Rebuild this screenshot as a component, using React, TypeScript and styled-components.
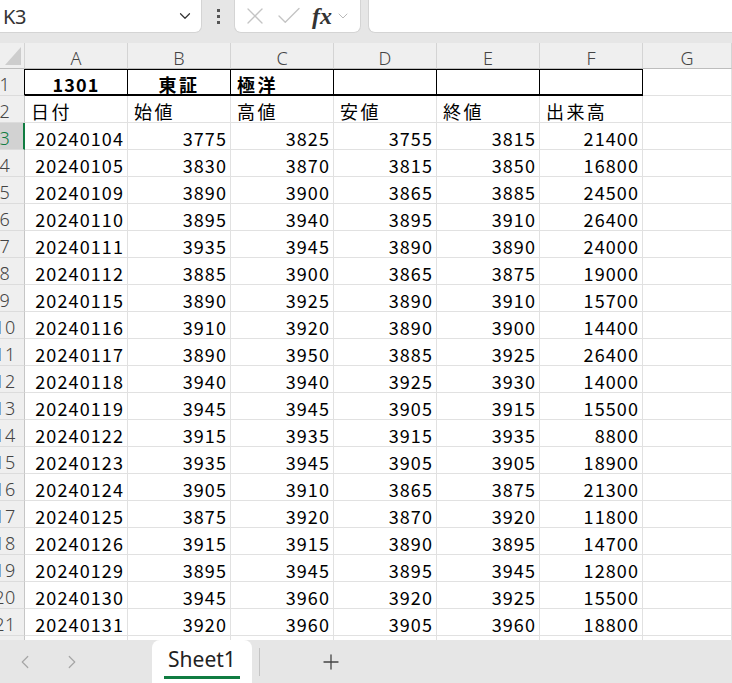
import React from 'react'
import styled, { createGlobalStyle, css } from 'styled-components'
import { ChevronDown, ChevronLeft, ChevronRight, Plus, X, Check } from 'lucide-react'

const GlobalStyle = createGlobalStyle`
  html, body {
    margin: 0;
    padding: 0;
    background: #e6e6e6;
    overflow: hidden;
  }
  * {
    box-sizing: border-box;
  }
`

const CELL_FONT = `"Noto Sans CJK JP", "Noto Sans", sans-serif`

const rows: [string, number, number, number, number, number][] = [
  ['20240104', 3775, 3825, 3755, 3815, 21400],
  ['20240105', 3830, 3870, 3815, 3850, 16800],
  ['20240109', 3890, 3900, 3865, 3885, 24500],
  ['20240110', 3895, 3940, 3895, 3910, 26400],
  ['20240111', 3935, 3945, 3890, 3890, 24000],
  ['20240112', 3885, 3900, 3865, 3875, 19000],
  ['20240115', 3890, 3925, 3890, 3910, 15700],
  ['20240116', 3910, 3920, 3890, 3900, 14400],
  ['20240117', 3890, 3950, 3885, 3925, 26400],
  ['20240118', 3940, 3940, 3925, 3930, 14000],
  ['20240119', 3945, 3945, 3905, 3915, 15500],
  ['20240122', 3915, 3935, 3915, 3935, 8800],
  ['20240123', 3935, 3945, 3905, 3905, 18900],
  ['20240124', 3905, 3910, 3865, 3875, 21300],
  ['20240125', 3875, 3920, 3870, 3920, 11800],
  ['20240126', 3915, 3915, 3890, 3895, 14700],
  ['20240129', 3895, 3945, 3895, 3945, 12800],
  ['20240130', 3945, 3960, 3920, 3925, 15500],
  ['20240131', 3920, 3960, 3905, 3960, 18800],
]

const columns = ['A', 'B', 'C', 'D', 'E', 'F', 'G']
const headings = ['日付', '始値', '高値', '安値', '終値', '出来高']

export default function App() {
  return (
    <>
      <GlobalStyle />
      <Window>
        <FormulaBar>
          <NameBox>
            <NameText>K3</NameText>
            <ChevronDown size={18} strokeWidth={1.6} color="#333" />
          </NameBox>
          <Grip>
            <Dot />
            <Dot />
            <Dot />
          </Grip>
          <FxBox>
            <X size={28} strokeWidth={1.1} color="#c4c4c4" />
            <Check size={30} strokeWidth={1.1} color="#c4c4c4" />
            <FxLabel>fx</FxLabel>
            <ChevronDown size={16} strokeWidth={1.4} color="#b4b4b4" />
          </FxBox>
          <FormulaInput />
        </FormulaBar>

        <Sheet>
          <Corner>
            <Triangle />
          </Corner>
          {columns.map((c) => (
            <ColHead key={c}>{c}</ColHead>
          ))}

          <RowHead $boxed>
            <RowNum>1</RowNum>
          </RowHead>
          <Cell $boxed $bold $align="center">1301</Cell>
          <Cell $boxed $bold $align="center" $wide>東証</Cell>
          <Cell $boxed $bold $wide>極洋</Cell>
          <Cell $boxed />
          <Cell $boxed />
          <Cell $boxed />
          <Cell />

          <RowHead>
            <RowNum>2</RowNum>
          </RowHead>
          {headings.map((h) => (
            <Cell key={h} $wide>
              {h}
            </Cell>
          ))}
          <Cell />

          {rows.map((r, i) => (
            <React.Fragment key={r[0]}>
              <RowHead $selected={i === 0}>
                <RowNum>{i + 3}</RowNum>
              </RowHead>
              {r.map((v, j) => (
                <Cell key={j} $align="right">
                  {v}
                </Cell>
              ))}
              <Cell />
            </React.Fragment>
          ))}

          <RowHead>
            <RowNum>22</RowNum>
          </RowHead>
          {columns.map((c) => (
            <Cell key={c} />
          ))}
        </Sheet>

        <SheetBar>
          <Nav>
            <ChevronLeft size={22} strokeWidth={1.3} color="#a6a6a6" />
            <ChevronRight size={22} strokeWidth={1.3} color="#a6a6a6" />
          </Nav>
          <Tab>
            <TabLabel>Sheet1</TabLabel>
          </Tab>
          <Divider />
          <AddSheet>
            <Plus size={24} strokeWidth={1.3} color="#444" />
          </AddSheet>
        </SheetBar>
      </Window>
    </>
  )
}

const Window = styled.div`
  width: 732px;
  height: 683px;
  display: flex;
  flex-direction: column;
  background: #e6e6e6;
  overflow: hidden;
`

const FormulaBar = styled.div`
  height: 43px;
  flex: none;
  display: flex;
  align-items: flex-start;
  background: #e6e6e6;
`

const boxBase = css`
  height: 33px;
  background: #fff;
  border: 1px solid #d4d4d4;
  border-top: none;
  display: flex;
  align-items: center;
`

const NameBox = styled.div`
  ${boxBase};
  width: 202px;
  border-left: none;
  border-radius: 0 0 7px 0;
  padding: 0 7px 0 3px;
  justify-content: space-between;
`

const NameText = styled.span`
  font-family: 'Noto Sans', 'Liberation Sans', sans-serif;
  font-size: 20px;
  color: #333;
  letter-spacing: -0.5px;
`

const Grip = styled.div`
  width: 32px;
  height: 33px;
  display: flex;
  flex-direction: column;
  align-items: center;
  justify-content: center;
  gap: 3px;
`

const Dot = styled.span`
  width: 3px;
  height: 3px;
  background: #555;
`

const FxBox = styled.div`
  ${boxBase};
  width: 127px;
  border-radius: 0 0 7px 7px;
  padding: 0 4px 0 6px;
  gap: 5px;
`

const FxLabel = styled.span`
  font-family: 'Liberation Serif', 'DejaVu Serif', serif;
  font-style: italic;
  font-weight: 700;
  font-size: 24px;
  color: #333;
  margin-left: 3px;
  margin-right: -2px;
`

const FormulaInput = styled.div`
  ${boxBase};
  flex: 1;
  margin-left: 7px;
  border-right: none;
  border-radius: 0 0 0 7px;
`

const Sheet = styled.div`
  flex: 1;
  display: grid;
  grid-template-columns: 25px repeat(6, 103px) 1fr;
  grid-template-rows: 26px;
  grid-auto-rows: 27px;
  align-content: start;
  overflow: hidden;
  background: #fff;
`

const Corner = styled.div`
  background: #efefef;
  border-right: 1px solid #d4d4d4;
  border-bottom: 1px solid #bdbdbd;
  display: flex;
  align-items: flex-end;
  justify-content: flex-end;
  padding: 0 3px 3px 0;
`

const Triangle = styled.div`
  width: 16px;
  height: 18px;
  background: #cdcdcd;
  clip-path: polygon(100% 0, 100% 100%, 0 100%);
`

const ColHead = styled.div`
  background: #efefef;
  border-right: 1px solid #d4d4d4;
  border-bottom: 1px solid #bdbdbd;
  display: flex;
  align-items: center;
  justify-content: center;
  font-family: 'Noto Sans', 'Liberation Sans', sans-serif;
  font-size: 18px;
  color: #444;
  font-weight: 300;
  padding-top: 5px;
`

const RowHead = styled.div<{ $selected?: boolean; $boxed?: boolean }>`
  background: #efefef;
  border-right: 1px solid #c6c6c6;
  border-bottom: 1px solid #dcdcdc;
  overflow: hidden;
  display: flex;
  align-items: center;
  padding-top: 4px;
  color: #444;
  ${(p) =>
    p.$boxed &&
    css`
      border-right-color: #000;
    `}
  ${(p) =>
    p.$selected &&
    css`
      background: #d2d2d2;
      color: #107c41;
      border-right: 2px solid #107c41;
    `}
`

const RowNum = styled.span`
  flex: none;
  width: 40px;
  margin-left: -15px;
  text-align: center;
  font-family: 'Noto Sans', 'Liberation Sans', sans-serif;
  font-size: 18px;
  letter-spacing: 0.5px;
  font-weight: 300;
`

type CellProps = {
  $align?: 'left' | 'right' | 'center'
  $bold?: boolean
  $boxed?: boolean
  $wide?: boolean
}

const Cell = styled.div<CellProps>`
  border-right: 1px solid #e1e1e1;
  border-bottom: 1px solid #e1e1e1;
  display: flex;
  align-items: center;
  justify-content: ${(p) =>
    p.$align === 'right' ? 'flex-end' : p.$align === 'center' ? 'center' : 'flex-start'};
  padding: 4px ${(p) => (p.$align === 'right' ? '3px' : '6px')} 0 6px;
  font-family: ${CELL_FONT};
  font-size: 18px;
  letter-spacing: ${(p) => (p.$wide ? '2.4px' : '1.1px')};
  font-weight: ${(p) => (p.$bold ? 700 : 400)};
  color: #000;
  white-space: nowrap;
  overflow: hidden;
  ${(p) =>
    p.$boxed &&
    css`
      border-right-color: #000;
      border-bottom: 2px solid #000;
      box-shadow: inset 0 1px 0 #000;
      padding-top: 5px;
    `}
`

const SheetBar = styled.div`
  height: 43px;
  flex: none;
  display: flex;
  align-items: stretch;
  background: #e6e6e6;
`

const Nav = styled.div`
  width: 152px;
  display: flex;
  align-items: center;
  gap: 25px;
  padding-left: 14px;
`

const Tab = styled.div`
  width: 100px;
  background: #fff;
  border-radius: 8px 8px 0 0;
  display: flex;
  justify-content: center;
  padding-top: 6px;
`

const TabLabel = styled.span`
  height: 33px;
  padding: 0 4px;
  border-bottom: 3px solid #107c41;
  font-family: 'Noto Sans', 'Liberation Sans', sans-serif;
  font-size: 21px;
  line-height: 27px;
  color: #222;
`

const Divider = styled.div`
  width: 1px;
  margin: 8px 0 7px 7px;
  background: #c4c4c4;
`

const AddSheet = styled.div`
  display: flex;
  align-items: center;
  margin-left: 59px;
`
